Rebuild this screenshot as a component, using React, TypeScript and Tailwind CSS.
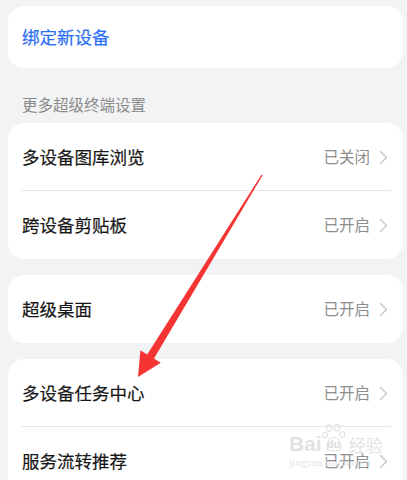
import React from 'react';

interface Row {
  label: string;
  value: string;
}

const groups: Row[][] = [
  [
    { label: '多设备图库浏览', value: '已关闭' },
    { label: '跨设备剪贴板', value: '已开启' },
  ],
  [{ label: '超级桌面', value: '已开启' }],
  [
    { label: '多设备任务中心', value: '已开启' },
    { label: '服务流转推荐', value: '已开启' },
  ],
];

function Chevron() {
  return (
    <svg width="9" height="15" viewBox="0 0 9 15" fill="none" className="ml-[9px]">
      <path d="M1.5 1.5 L7.5 7.5 L1.5 13.5" stroke="#c4c4c4" strokeWidth="1.3" strokeLinecap="round" strokeLinejoin="round" />
    </svg>
  );
}

function SettingRow({ row, last }: { row: Row; last: boolean }) {
  return (
    <div className="relative flex h-[68px] items-center justify-between pl-[14px] pr-[15px]">
      <span className="text-[17.5px] text-[#161616] [-webkit-text-stroke:0.2px_#161616]">{row.label}</span>
      <div className="flex items-center">
        <span className="text-[15.5px] text-[#8e8e8e]">{row.value}</span>
        <Chevron />
      </div>
      {!last && <div className="absolute bottom-0 left-[13px] right-[12px] h-px bg-[#e6e6e6]" />}
    </div>
  );
}

export default function App() {
  return (
    <div
      className="relative h-[480px] w-[407px] overflow-hidden bg-[#f1f3f5] pl-[8px] pr-[4px] pt-[6px]"
      style={{ fontFamily: '"Noto Sans CJK SC", "Noto Sans", sans-serif' }}
    >
      <div className="flex h-[62px] items-center rounded-[16px] bg-white pl-[14px]">
        <span className="text-[17.5px] text-[#2a6ef6] [-webkit-text-stroke:0.2px_#2a6ef6]">绑定新设备</span>
      </div>

      <div className="flex h-[55px] items-center pl-[14px] pt-[19px]">
        <span className="text-[15.5px] text-[#8a8a8a]">更多超级终端设置</span>
      </div>

      <div className="flex flex-col gap-[16px]">
        {groups.map((group, gi) => (
          <div key={gi} className="rounded-[16px] bg-white">
            {group.map((row, ri) => (
              <SettingRow key={row.label} row={row} last={ri === group.length - 1} />
            ))}
          </div>
        ))}
      </div>

      {/* baidu watermark */}
      <div className="pointer-events-none absolute left-[289px] top-[424px] flex flex-col items-start">
        <div className="flex items-end text-[#e2e2e2]" style={{ fontFamily: '"Liberation Sans", sans-serif' }}>
          <span className="text-[21px] font-bold leading-none">Bai</span>
          <div className="relative flex h-[30px] w-[24px] items-end justify-center">
            <svg className="absolute left-0 top-0" width="24" height="30" viewBox="0 0 24 30" fill="none" stroke="#e2e2e2" strokeWidth="1.2">
              <ellipse cx="7" cy="4" rx="2.6" ry="3.2" />
              <ellipse cx="15" cy="3.6" rx="2.6" ry="3.2" />
              <ellipse cx="3" cy="11" rx="2.4" ry="3" />
              <ellipse cx="20.5" cy="10.5" rx="2.4" ry="3" />
              <path d="M5 24 C5 16 9 13 12 13 C15 13 19 16 19 24 C19 28 5 28 5 24 Z" />
            </svg>
            <span className="relative mb-[4px] text-[10px] font-bold leading-none text-[#dcdcdc]">du</span>
          </div>
          <span className="ml-[3px] mb-[1px] text-[17px] leading-none" style={{ fontFamily: '"Noto Sans CJK SC", sans-serif' }}>经验</span>
        </div>
        <span className="mt-[3px] text-[11px] leading-none text-[#e4e4e4]" style={{ fontFamily: '"Liberation Serif", serif' }}>
          jingyan.baidu.com
        </span>
      </div>

      {/* red arrow */}
      <svg className="pointer-events-none absolute left-0 top-0" width="407" height="480" viewBox="0 0 407 480">
        <polygon
          points="262.6,175.3 261.6,174.6 147.2,354.4 140.4,350.2 138,377 160.8,362.8 154,358.6"
          fill="#f53434"
        />
      </svg>
    </div>
  );
}
